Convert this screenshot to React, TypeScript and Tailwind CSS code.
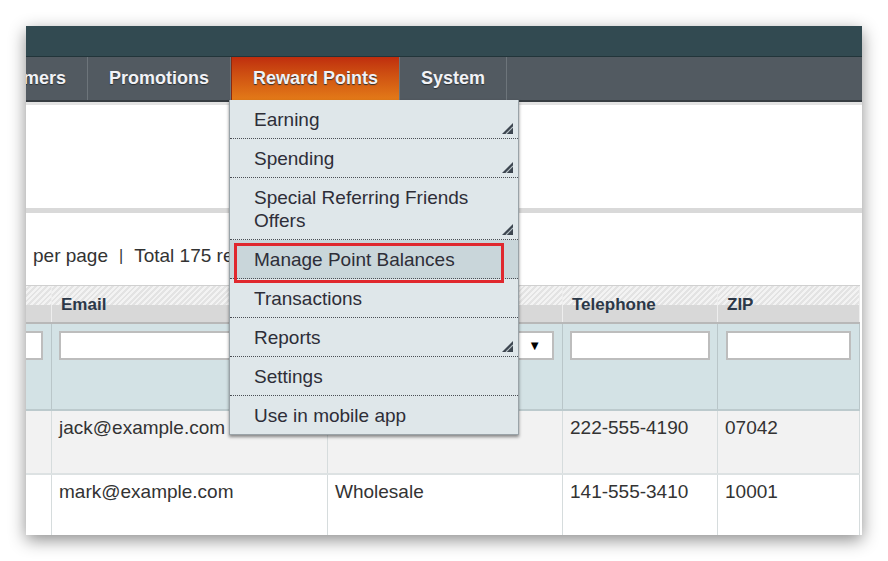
import type { ReactNode } from "react";

const font = "font-['Liberation_Sans',Arial,sans-serif]";

function SubArrow() {
	return (
		<svg
			className="absolute right-[5px] bottom-[4px]"
			width="11"
			height="11"
			viewBox="0 0 11 11"
		>
			<polygon points="0,11 11,0 11,11" fill="#3d4650" />
			<line x1="4" y1="11" x2="11" y2="4" stroke="#b9c3c8" strokeWidth="1.2" />
		</svg>
	);
}

interface MenuItemProps {
	children: ReactNode;
	sub?: boolean;
	last?: boolean;
	active?: boolean;
}

function MenuItem({ children, sub, last, active }: MenuItemProps) {
	return (
		<div
			className={`relative pl-[24px] pr-[20px] pt-[8px] pb-[7px] text-[19px] leading-[23px] text-[#2e2e38] ${
				last ? "" : "border-b border-dotted border-[#4a4f55]"
			} ${active ? "bg-[#c9d6da]" : ""}`}
		>
			{children}
			{sub && <SubArrow />}
			{active && (
				<div className="absolute left-[4px] top-[3px] w-[270px] h-[40px] border-[3px] border-[#e0282e] z-10" />
			)}
		</div>
	);
}

function NavItem({ children, active }: { children: ReactNode; active?: boolean }) {
	return (
		<div
			className={`flex items-center px-[21px] text-[18px] font-bold text-[#f1f2f6] [text-shadow:0_1px_1px_#2a2f33] border-r border-[#6d757b] ${
				active ? "bg-gradient-to-b from-[#bf2d0e] to-[#e37a18] border-l border-l-[#8a2a10]" : ""
			}`}
		>
			{children}
		</div>
	);
}

function FilterInput({ className = "" }: { className?: string }) {
	return <div className={`h-[29px] bg-white border-2 border-[#bdbdbd] ${className}`} />;
}

const cols = "grid grid-cols-[26px_276px_235px_155px_142px]";
const cell = "border-r border-[#d6dcdd]";

export default function App() {
	return (
		<div className={`w-[888px] h-[561px] bg-white pl-[26px] pt-[26px] ${font}`}>
			<div className="relative w-[836px] h-[509px] bg-white overflow-hidden shadow-[0_5px_16px_rgba(0,0,0,0.45)]">
				{/* header bars */}
				<div className="h-[31px] bg-[#324a51] border-b border-[#22353a]" />
				<div className="flex h-[45px] bg-[#525a61] border-b-2 border-[#363c41]">
					<div className="w-[62px] flex items-center justify-end pr-[21px] text-[18px] font-bold text-[#f1f2f6] [text-shadow:0_1px_1px_#2a2f33] border-r border-[#6d757b]">
						mers
					</div>
					<NavItem>Promotions</NavItem>
					<NavItem active>Reward Points</NavItem>
					<NavItem>System</NavItem>
				</div>
				<div className="h-[3px] bg-[#e3e3e3]" />
				<div className="h-[103px]" />
				<div className="h-[5px] bg-[#d9d9d9]" />

				<div className="h-[72px] w-[203px] overflow-hidden whitespace-nowrap flex pt-[31px] pl-[7px] text-[19px] leading-[23px] text-[#333]">
					<span>per page</span>
					<span className="mx-[11px] text-[16px]">|</span>
					<span>Total 175 records found</span>
				</div>

				{/* table */}
				<div className="border-t border-[#d0d0d0] w-[834px]">
					<div className={`${cols} h-[38px] border-b-2 border-[#b8b8b8]`}>
						{["", "Email", "", "Telephone", "ZIP"].map((h, i) => (
							<div key={i} className="relative bg-[#d8d8d8] border-r border-[#eeeeee]">
								<div className="absolute inset-x-0 top-0 h-[19px] bg-[repeating-linear-gradient(135deg,#f3f3f3_0px,#f3f3f3_2px,#e3e3e3_2px,#e3e3e3_4px)]" />
								{h && (
									<div className="relative pt-[9px] pl-[9px] text-[17px] leading-[20px] font-bold text-[#2c3848]">
										{h}
									</div>
								)}
							</div>
						))}
					</div>

					<div className={`${cols} h-[87px] bg-[#d3e2e5] border-b-2 border-[#bccacd]`}>
						<div className="border-r border-[#b9c6c9] overflow-hidden pt-[7px]">
							<FilterInput className="w-[40px] -ml-[23px]" />
						</div>
						<div className="border-r border-[#b9c6c9] pt-[7px] px-[7px]">
							<FilterInput />
						</div>
						<div className="border-r border-[#b9c6c9] pt-[7px] pl-[7px] pr-[8px]">
							<div className="h-[29px] bg-white border-2 border-[#bdbdbd] flex items-center justify-end pr-[11px] text-[13px] text-black">
								▼
							</div>
						</div>
						<div className="border-r border-[#b9c6c9] pt-[7px] px-[7px]">
							<FilterInput />
						</div>
						<div className="border-r border-[#b9c6c9] pt-[7px] px-[8px]">
							<FilterInput />
						</div>
					</div>

					<div className={`${cols} h-[64px] bg-[#f2f2f2] border-b-2 border-[#dde2e3] text-[19px] text-[#333]`}>
						<div className={cell} />
						<div className={`${cell} pl-[7px] pt-[3px]`}>jack@example.com</div>
						<div className={cell} />
						<div className={`${cell} pl-[7px] pt-[3px]`}>222-555-4190</div>
						<div className={`${cell} pl-[7px] pt-[3px]`}>07042</div>
					</div>
					<div className={`${cols} h-[62px] bg-white text-[19px] text-[#333]`}>
						<div className={cell} />
						<div className={`${cell} pl-[7px] pt-[3px]`}>mark@example.com</div>
						<div className={`${cell} pl-[7px] pt-[3px]`}>Wholesale</div>
						<div className={`${cell} pl-[7px] pt-[3px]`}>141-555-3410</div>
						<div className={`${cell} pl-[7px] pt-[3px]`}>10001</div>
					</div>
				</div>

				{/* Reward Points dropdown */}
				<div className="absolute left-[203px] top-[74px] w-[290px] bg-[#dfe7ea] border-x border-b border-[#9aa3a8] shadow-[0_2px_3px_rgba(0,0,0,0.45)] z-20">
					<MenuItem sub>Earning</MenuItem>
					<MenuItem sub>Spending</MenuItem>
					<MenuItem sub>
						Special Referring Friends
						<br />
						Offers
					</MenuItem>
					<MenuItem active>Manage Point Balances</MenuItem>
					<MenuItem>Transactions</MenuItem>
					<MenuItem sub>Reports</MenuItem>
					<MenuItem>Settings</MenuItem>
					<MenuItem last>Use in mobile app</MenuItem>
				</div>
			</div>
		</div>
	);
}
